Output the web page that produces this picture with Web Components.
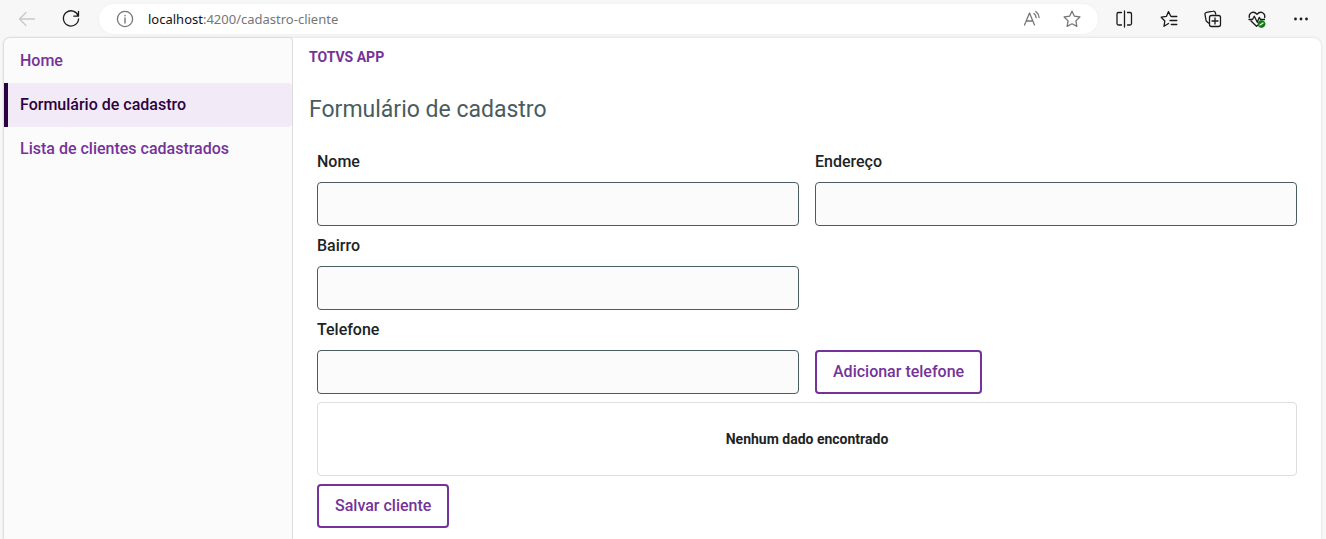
<!DOCTYPE html>
<html lang="pt-BR">
<head>
<meta charset="utf-8">
<title>TOTVS APP</title>
<style>
html, body { height: 100%; margin: 0; }
body { font: 16px/24px Roboto, sans-serif; color: #1d2426; background: #f7f7f7; }
</style>
</head>
<body>
<cadastro-page></cadastro-page>
<script>
const define = (name, html, setup) => customElements.define(name, class extends HTMLElement {
  constructor() {
    super();
    const root = this.attachShadow({ mode: 'open' });
    const t = document.createElement('template');
    t.innerHTML = '<style>*{box-sizing:border-box}</style>' + html;
    root.append(t.content.cloneNode(true));
    if (setup) setup.call(this, root);
  }
});

define('browser-bar', `
<style>
:host { display: flex; align-items: center; height: 38px; padding: 0 13px 0 15px; }
button { display: grid; place-items: center; width: 24px; height: 24px; padding: 0; border: 0; background: none; color: #1b1b1b; }
button:disabled { color: #c9c9c9; }
svg { display: block; width: 24px; height: 24px; fill: none; stroke: currentColor; stroke-width: 1.3; stroke-linecap: round; stroke-linejoin: round; }
.reload { margin-left: 20px; }
.address { flex: 1; display: flex; align-items: center; height: 30px; margin: 0 15px 0 16px; padding: 0 14px; background: #fff; border-radius: 15px; box-shadow: 0 0 3px #0000000d; }
.address button { color: #767676; }
.url { flex: 1; margin-left: 11px; font: 13px/20px "Noto Sans", sans-serif; color: #767676; }
.url b { font-weight: 400; color: #111; }
.tools { display: flex; gap: 20px; }
.address .star { margin-left: 16px; }
</style>
<button aria-label="Voltar" disabled><svg viewBox="0 0 24 24"><path d="M19.5 12h-15M11 5.500l-6.500 6.500L11 18.500"/></svg></button>
<button class="reload" aria-label="Atualizar"><svg viewBox="0 0 24 24"><path d="M19.3 9.200A7.600 7.600 0 1 0 19.600 12M19.500 4.500v4.700h-4.700"/></svg></button>
<div class="address">
<button aria-label="Informações do site"><svg viewBox="0 0 24 24"><circle cx="12" cy="12" r="7.6"/><path d="M12 11v5M12 8.4v.4" stroke-width="1.4"/></svg></button>
<div class="url"><b>localhost</b>:4200/cadastro-cliente</div>
<button aria-label="Ler em voz alta"><svg viewBox="0 0 24 24"><path d="M4.5 18 9.5 6l5 12M6.1 14h6.8M14 6.500q2 1.700 2.200 4.200M15.800 4.500q3 2.400 3.300 6"/></svg></button>
<button class="star" aria-label="Favoritar"><svg viewBox="0 0 24 24"><path d="m12 4.200 2.400 5 5.500.800-4 3.900.95 5.500-4.850-2.600-4.850 2.600.95-5.500-4-3.900 5.500-.8z"/></svg></button>
</div>
<div class="tools">
<button aria-label="Tela dividida"><svg viewBox="0 0 24 24"><path d="M8.500 5.500H5.500a1.500 1.500 0 0 0-1.500 1.500v9.500A1.500 1.500 0 0 0 5.500 18h3M14.500 5.500H17a1.500 1.500 0 0 1 1.500 1.500v9.500A1.500 1.500 0 0 1 17 18h-2.500M11.500 4v16"/></svg></button>
<button aria-label="Favoritos"><svg viewBox="0 0 24 24"><path d="M11.500 16.500 7 19.300l.8-5.300-3.600-3.800 5.300-.9L11.500 4.500l2.100 4.500M14.300 9.500h5.500M13 13.500h6.800M14.300 17.500h5.500"/></svg></button>
<button aria-label="Coleções"><svg viewBox="0 0 24 24"><path d="M7.500 16 5.200 14 4 7.700A2 2 0 0 1 5.600 5.300l6.400-1.100a2 2 0 0 1 2.400 1.600L14.700 7"/><rect x="8.500" y="8.500" width="11" height="11" rx="2"/><path d="M14 11v6M11 14h6"/></svg></button>
<button aria-label="Desempenho"><svg viewBox="0 0 24 24"><path d="M4.300 10.500C3.500 6.500 8 3 12 7.200 16 3 20.500 6.500 19.700 10.500M6 14l5.500 5.300L13 18M4 12.500h3.500l1.800-3.200 3 6 2-5 1.200 2.200h4"/><circle cx="16.500" cy="17" r="3.400" fill="#107c10" stroke="#107c10" stroke-width="1"/><path d="m15 18 3-2" stroke="#fff"/></svg></button>
<button aria-label="Mais"><svg viewBox="0 0 24 24"><g fill="currentColor" stroke="none"><circle cx="6.500" cy="12" r="1.400"/><circle cx="12" cy="12" r="1.400"/><circle cx="17.500" cy="12" r="1.400"/></g></svg></button>
</div>`);

define('menu-link', `
<style>
:host { display: block; }
a { display: flex; align-items: center; height: 44px; padding: 0 16px; font-weight: 500; color: #753399; text-decoration: none; }
:host([active]) a { padding-left: 12px; border-left: 4px solid #2c0140; border-radius: 0 4px 4px 0; background: #f2eaf6; color: #2c0140; }
</style>
<a href="#"><slot></slot></a>`);

define('side-menu', `
<style>
:host { display: block; flex: none; width: 289px; padding-top: 1px; background: #fbfbfb; border-right: 1px solid #dadedf; border-top-left-radius: 6px; border-top-right-radius: 4px; box-shadow: 0 0 2px #00000033; clip-path: inset(-4px 0 0 -4px); }
</style>
<nav><slot></slot></nav>`);

define('form-field', `
<style>
:host { display: block; }
label { display: block; margin-bottom: 8px; font-weight: 500; }
input { display: block; width: 100%; height: 44px; padding: 0 16px; border: 1px solid #4a5c60; border-radius: 4px; background: #fbfbfb; font: inherit; }
</style>
<label for="field"></label><input id="field" type="text">`, function (root) {
  root.querySelector('label').textContent = this.getAttribute('label');
});

define('outline-button', `
<style>
:host { display: block; }
button { height: 44px; padding: 0 16px; border: 2px solid #753399; border-radius: 4px; background: #fff; font: inherit; font-weight: 500; color: #753399; }
</style>
<button type="button"><slot></slot></button>`);

define('empty-table', `
<style>
:host { display: block; border: 1px solid #dadedf; border-radius: 4px; }
table { width: 100%; border-collapse: collapse; }
td { height: 72px; padding: 0; text-align: center; font-size: 14px; font-weight: 700; }
</style>
<table><tbody><tr><td><slot></slot></td></tr></tbody></table>`);

define('cadastro-page', `
<style>
:host { display: flex; flex-direction: column; min-height: 100%; }
.app { flex: 1; display: flex; margin: 0 5px 0 4px; background: #fff; border-radius: 6px 8px 0 0; box-shadow: 0 0 3px #00000026; }
main { flex: 1; padding: 8px 16px; }
.brand { font-size: 14px; line-height: 22px; font-weight: 700; color: #753399; }
h1 { margin: 26px 0 24px; font-size: 23px; font-weight: 400; line-height: 32px; color: #4a5c60; }
form { display: grid; grid-template-columns: 1fr 1fr; gap: 8px 16px; padding: 0 8px; }
.left { grid-column: 1; }
.wide { grid-column: 1 / -1; }
.add { align-self: end; }
</style>
<browser-bar></browser-bar>
<div class="app">
<side-menu>
<menu-link>Home</menu-link>
<menu-link active>Formulário de cadastro</menu-link>
<menu-link>Lista de clientes cadastrados</menu-link>
</side-menu>
<main>
<div class="brand">TOTVS APP</div>
<h1>Formulário de cadastro</h1>
<form>
<form-field label="Nome"></form-field>
<form-field label="Endereço"></form-field>
<form-field class="left" label="Bairro"></form-field>
<form-field class="left" label="Telefone"></form-field>
<outline-button class="add">Adicionar telefone</outline-button>
<empty-table class="wide">Nenhum dado encontrado</empty-table>
<outline-button class="wide">Salvar cliente</outline-button>
</form>
</main>
</div>`);
</script>
</body>
</html>
